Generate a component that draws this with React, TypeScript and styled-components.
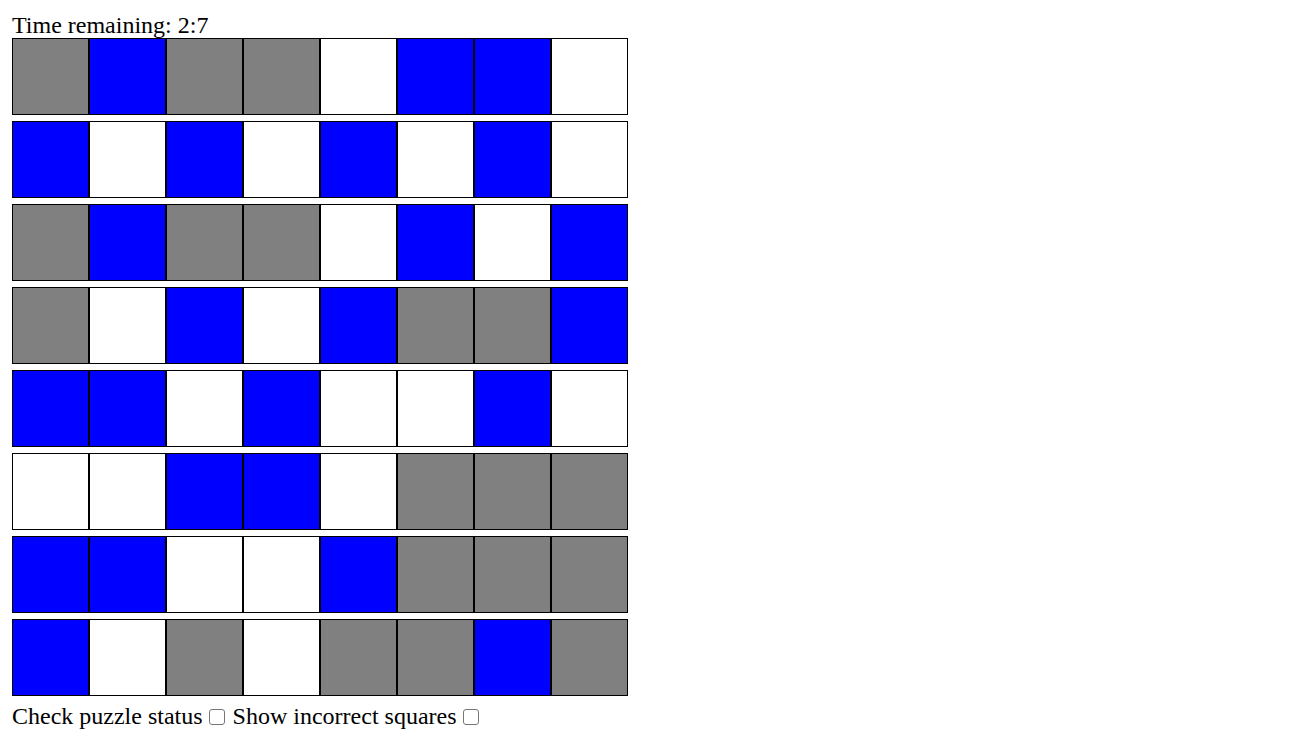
import React from "react";
import styled, { createGlobalStyle } from "styled-components";

const Global = createGlobalStyle`
  body { margin: 8px; background: #fff; }
  #root { padding: 4px; font-family: "Liberation Serif", "Times New Roman", serif; font-size: 24px; color: #000; }
`;

type C = "G" | "B" | "W";
const grid: C[][] = [
  ["G", "B", "G", "G", "W", "B", "B", "W"],
  ["B", "W", "B", "W", "B", "W", "B", "W"],
  ["G", "B", "G", "G", "W", "B", "W", "B"],
  ["G", "W", "B", "W", "B", "G", "G", "B"],
  ["B", "B", "W", "B", "W", "W", "B", "W"],
  ["W", "W", "B", "B", "W", "G", "G", "G"],
  ["B", "B", "W", "W", "B", "G", "G", "G"],
  ["B", "W", "G", "W", "G", "G", "B", "G"],
];

const colors: Record<C, string> = { G: "#808080", B: "#0000ff", W: "#ffffff" };

const Page = styled.div`
  display: flex;
  flex-direction: column;
  align-items: flex-start;
`;

const Timer = styled.div`
  line-height: 26px;
`;

const Board = styled.div`
  display: flex;
  flex-direction: column;
  gap: 6px;
`;

const Row = styled.div`
  display: flex;
`;

const Cell = styled.div<{ $c: C }>`
  width: 75px;
  height: 75px;
  border: 1px solid #000;
  background: ${(p) => colors[p.$c]};
`;

const Controls = styled.div`
  margin-top: 6px;
  line-height: 28px;
  white-space: nowrap;
`;

const Check = styled.input`
  appearance: none;
  -webkit-appearance: none;
  box-sizing: border-box;
  width: 16px;
  height: 16px;
  margin: 0 2px 0 0;
  border: 1.5px solid #767676;
  border-radius: 3px;
  background: #fff;
  vertical-align: -1px;
`;

export default function App() {
  return (
    <Page>
      <Global />
      <Timer>Time remaining: 2:7</Timer>
      <Board>
        {grid.map((r, i) => (
          <Row key={i}>
            {r.map((c, j) => (
              <Cell key={j} $c={c} />
            ))}
          </Row>
        ))}
      </Board>
      <Controls>
        Check puzzle status <Check type="checkbox" /> Show incorrect squares <Check type="checkbox" />
      </Controls>
    </Page>
  );
}
